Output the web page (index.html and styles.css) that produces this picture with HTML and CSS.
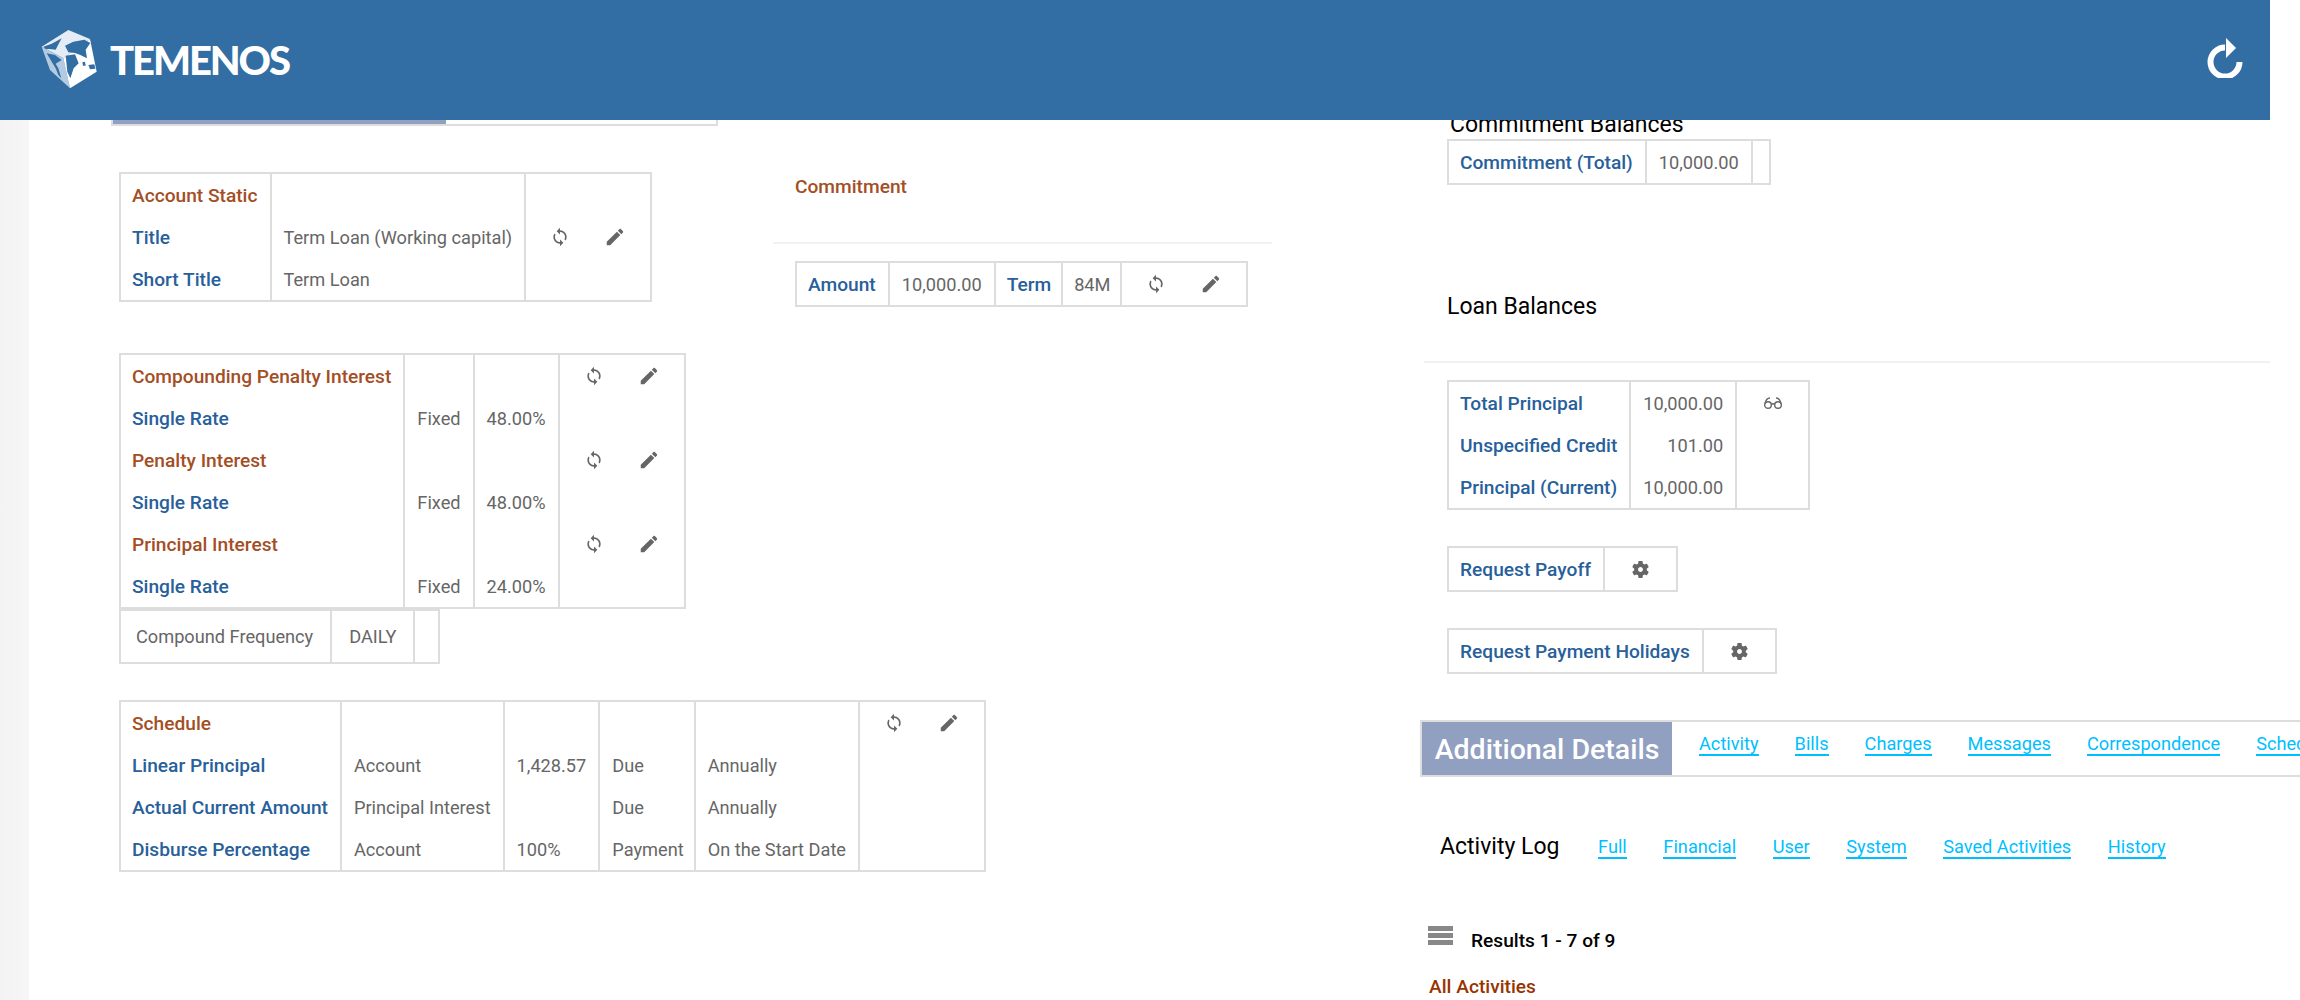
FILE: index.html
```html
<!DOCTYPE html>
<html lang="en">
<head>
<meta charset="utf-8">
<title>Temenos</title>
<link rel="stylesheet" href="styles.css">
</head>
<body>
<svg class="defs" width="0" height="0" aria-hidden="true">
  <symbol id="i-sync" viewBox="0 0 24 24"><path d="M12 4V1L8 5l4 4V6c3.31 0 6 2.69 6 6 0 1.01-.25 1.97-.7 2.8l1.46 1.46C19.54 15.03 20 13.57 20 12c0-4.42-3.58-8-8-8zm0 14c-3.31 0-6-2.69-6-6 0-1.01.25-1.97.7-2.8L5.24 7.74C4.46 8.97 4 10.43 4 12c0 4.42 3.58 8 8 8v3l4-4-4-4v3z"/></symbol>
  <symbol id="i-edit" viewBox="0 0 24 24"><path d="M3 17.25V21h3.75L17.81 9.94l-3.75-3.75L3 17.25zM20.71 7.04c.39-.39.39-1.02 0-1.41l-2.34-2.34c-.39-.39-1.02-.39-1.41 0l-1.83 1.83 3.75 3.75 1.83-1.83z"/></symbol>
  <symbol id="i-gear" viewBox="0 0 24 24"><path d="M19.14 12.94c.04-.3.06-.61.06-.94 0-.32-.02-.64-.07-.94l2.03-1.58c.18-.14.23-.41.12-.61l-1.92-3.32c-.12-.22-.37-.29-.59-.22l-2.39.96c-.5-.38-1.03-.7-1.62-.94l-.36-2.54c-.04-.24-.24-.41-.48-.41h-3.84c-.24 0-.43.17-.47.41l-.36 2.54c-.59.24-1.13.57-1.62.94l-2.39-.96c-.22-.08-.47 0-.59.22L2.74 8.87c-.12.21-.08.47.12.61l2.03 1.58c-.05.3-.09.63-.09.94s.02.64.07.94l-2.03 1.58c-.18.14-.23.41-.12.61l1.92 3.32c.12.22.37.29.59.22l2.39-.96c.5.38 1.03.7 1.62.94l.36 2.54c.05.24.24.41.48.41h3.84c.24 0 .44-.17.47-.41l.36-2.54c.59-.24 1.13-.56 1.62-.94l2.39.96c.22.08.47 0 .59-.22l1.92-3.32c.12-.22.07-.47-.12-.61l-2.01-1.58zM12 14.8c-1.54 0-2.8-1.26-2.8-2.8s1.26-2.8 2.8-2.8 2.8 1.26 2.8 2.8-1.26 2.8-2.8 2.8z"/></symbol>
</svg>

<header class="topbar">
  <div class="brand">
    <svg class="cube" viewBox="18 15 177 180" width="59" height="60" aria-hidden="true">
      <path fill="#e4edf5" d="M100 15 165 42 85 100 20 65z"/>
      <path fill="#b3cbe0" d="M20 65 85 100 105 190 45 135z"/>
      <path fill="#fff" d="M165 42 185 140 105 190 85 100z"/>
      <path fill="#326ea3" d="M25 65 50 56 80 40 72 55 62 74 44 72 32 72z"/>
      <path fill="#326ea3" d="M35 85 60 90 80 105 62 116 70 130 79 160 70 150 62 130 50 110z"/>
      <path fill="#326ea3" d="M90 62 115 50 148 44 166 54 152 74 156 100 136 90 120 84 100 82z"/>
      <path fill="#326ea3" d="M92 92 120 88 131 115 116 130 106 160 97 140z"/>
      <path fill="#326ea3" d="M160 120 178 118 181 131 165 133z"/>
      <path fill="#326ea3" d="M142 112 150 110 152 122 144 122z"/>
    </svg>
    <span class="wordmark">TEMENOS</span>
  </div>
  <svg class="reload" viewBox="0 0 36 40" width="36" height="40" aria-hidden="true">
    <path d="M32.5 24A14.5 14.5 0 1 1 18 9.5" fill="none" stroke="#fff" stroke-width="6"/>
    <path d="M19 0 29 10 19 20z" fill="#fff"/>
  </svg>
</header>

<main class="page">
  <div class="gutter"></div>

  <section class="col-left">
    <div class="tabbar"><div class="tabbar-active"></div></div>

    <table class="grid t-account">
      <tr><td class="head">Account Static</td><td></td><td></td></tr>
      <tr><td class="key">Title</td><td>Term Loan (Working capital)</td>
        <td class="acts"><svg class="sync"><use href="#i-sync"/></svg><svg class="edit"><use href="#i-edit"/></svg></td></tr>
      <tr><td class="key">Short Title</td><td>Term Loan</td><td></td></tr>
    </table>

    <table class="grid t-interest">
      <tr><td class="head">Compounding Penalty Interest</td><td></td><td></td>
        <td class="acts"><svg class="sync"><use href="#i-sync"/></svg><svg class="edit"><use href="#i-edit"/></svg></td></tr>
      <tr><td class="key">Single Rate</td><td>Fixed</td><td>48.00%</td><td></td></tr>
      <tr><td class="head">Penalty Interest</td><td></td><td></td>
        <td class="acts"><svg class="sync"><use href="#i-sync"/></svg><svg class="edit"><use href="#i-edit"/></svg></td></tr>
      <tr><td class="key">Single Rate</td><td>Fixed</td><td>48.00%</td><td></td></tr>
      <tr><td class="head">Principal Interest</td><td></td><td></td>
        <td class="acts"><svg class="sync"><use href="#i-sync"/></svg><svg class="edit"><use href="#i-edit"/></svg></td></tr>
      <tr><td class="key">Single Rate</td><td>Fixed</td><td>24.00%</td><td></td></tr>
    </table>

    <table class="grid t-freq">
      <tr><td>Compound Frequency</td><td>DAILY</td><td></td></tr>
    </table>

    <table class="grid t-schedule">
      <tr><td class="head">Schedule</td><td></td><td></td><td></td><td></td>
        <td class="acts"><svg class="sync"><use href="#i-sync"/></svg><svg class="edit"><use href="#i-edit"/></svg></td></tr>
      <tr><td class="key">Linear Principal</td><td>Account</td><td>1,428.57</td><td>Due</td><td>Annually</td><td></td></tr>
      <tr><td class="key">Actual Current Amount</td><td>Principal Interest</td><td></td><td>Due</td><td>Annually</td><td></td></tr>
      <tr><td class="key">Disburse Percentage</td><td>Account</td><td>100%</td><td>Payment</td><td>On the Start Date</td><td></td></tr>
    </table>
  </section>

  <section class="col-mid">
    <h3 class="commit-title">Commitment</h3>
    <hr class="rule">
    <table class="grid t-commit">
      <tr><td class="key">Amount</td><td>10,000.00</td><td class="key">Term</td><td>84M</td>
        <td class="acts"><svg class="sync"><use href="#i-sync"/></svg><svg class="edit"><use href="#i-edit"/></svg></td></tr>
    </table>
  </section>

  <section class="col-right">
    <h2 class="balance-title title-commit">Commitment Balances</h2>
    <table class="grid t-cbal">
      <tr><td class="key">Commitment (Total)</td><td>10,000.00</td><td></td></tr>
    </table>

    <h2 class="balance-title title-loan">Loan Balances</h2>
    <hr class="rule rule-right">
    <table class="grid t-loan">
      <tr><td class="key">Total Principal</td><td class="num">10,000.00</td>
        <td class="icon-cell"><svg class="glasses" viewBox="0 0 18 12" width="18" height="12" aria-hidden="true"><g fill="none" stroke="#666" stroke-width="1.4"><circle cx="4" cy="8" r="3.3"/><circle cx="14" cy="8" r="3.3"/><path d="M7.3 7.4c1.1-.8 2.3-.8 3.4 0M1 6.6C1.8 3 3.4 1 6 1M17 6.6C16.2 3 14.6 1 12 1"/></g></svg></td></tr>
      <tr><td class="key">Unspecified Credit</td><td class="num">101.00</td><td></td></tr>
      <tr><td class="key">Principal (Current)</td><td class="num">10,000.00</td><td></td></tr>
    </table>

    <table class="grid t-req t-payoff">
      <tr><td class="key">Request Payoff</td><td class="icon-cell"><svg class="gear"><use href="#i-gear"/></svg></td></tr>
    </table>
    <table class="grid t-req t-holiday">
      <tr><td class="key">Request Payment Holidays</td><td class="icon-cell"><svg class="gear"><use href="#i-gear"/></svg></td></tr>
    </table>

    <nav class="details-bar">
      <div class="details-tab">Additional Details</div>
      <a href="#">Activity</a>
      <a href="#">Bills</a>
      <a href="#">Charges</a>
      <a href="#">Messages</a>
      <a href="#">Correspondence</a>
      <a href="#">Schedule</a>
    </nav>

    <nav class="log-bar">
      <span class="log-title">Activity Log</span>
      <a href="#">Full</a>
      <a href="#">Financial</a>
      <a href="#">User</a>
      <a href="#">System</a>
      <a href="#">Saved Activities</a>
      <a href="#">History</a>
    </nav>

    <div class="results">
      <span class="burger"><i></i><i></i><i></i></span>
      <span class="results-text">Results 1 - 7 of 9</span>
    </div>
    <div class="all-activities">All Activities</div>
  </section>
</main>
</body>
</html>
```
FILE: styles.css
```css
* { box-sizing: border-box; }
html, body { margin: 0; height: 1000px; overflow: hidden; background: #fff; }
body { font: 18.2px/24px Roboto, "Liberation Sans", sans-serif; color: #666; }
.defs { position: absolute; }

.topbar {
  position: fixed; top: 0; left: 0; width: 2270px; height: 120px; z-index: 5;
  background: #326ea3; display: flex; align-items: center; justify-content: space-between;
  padding: 0 27px 0 41px;
}
.brand { display: flex; align-items: center; gap: 10px; }
.cube { display: block; }
.wordmark { font: 900 40px/60px Lato, sans-serif; color: #fff; letter-spacing: -2.1px; }
.reload { display: block; margin-top: -4px; }

.page { display: flex; height: 1000px; }
.gutter { width: 29px; flex: none; background: linear-gradient(90deg, #f3f3f3, #f6f6f6); }

.col-left { width: 744px; flex: none; padding: 66px 0 0 90px; }
.col-mid { width: 499px; flex: none; padding-top: 175px; }
.col-right { width: 880px; flex: none; margin-left: 148px; padding-top: 113px; overflow: hidden; height: 1000px; }

.tabbar { margin: 0 0 46px -8px; width: 607px; height: 60px; border: 2px solid #ddd; border-top: 0; background: #fff; }
.tabbar-active { width: 333px; height: 58px; background: #919fc0; }

.grid { width: max-content; border-collapse: separate; border-spacing: 0; border: 2px solid #ddd; background: #fff; position: relative; }
.grid td { height: 42px; padding: 2px 12px 0 11px; white-space: nowrap; vertical-align: middle; }
.grid td + td { border-left: 2px solid #ddd; padding-left: 12px; }
.head, .key { font-size: 19.15px; font-weight: 500; }
.head { color: #a34e24; }
.key { color: #27609a; }
.num { text-align: right; }

.grid td.acts { padding: 0; width: 126px; text-align: center; font-size: 0; line-height: 0; }
.sync, .edit { width: 20px; height: 20px; fill: #666; vertical-align: middle; }
.sync { margin-right: 34px; }
.edit { width: 22px; height: 22px; }
.grid td.icon-cell { padding: 0; text-align: center; font-size: 0; line-height: 0; }
.gear { width: 21px; height: 21px; fill: #666; vertical-align: middle; }

.t-interest { margin-top: 51px; }
.t-freq { margin-top: 0; }
.grid.t-freq td { height: 51px; padding: 0 17px 0 15px; }
.grid.t-freq td + td { padding: 0 17px; }
.grid.t-freq td:last-child { width: 25px; padding: 0; }
.t-schedule { margin-top: 36px; }
.grid.t-schedule td:nth-child(4) { padding-right: 10px; }
.t-loan { margin-top: 17px; }
.t-loan .icon-cell { width: 73px; }
.t-req .icon-cell { width: 73px; }
.t-payoff { margin-top: 36px; }
.t-holiday { margin-top: 36px; }

.commit-title { margin: 0 0 0 22px; font: 500 19.15px/24px Roboto, sans-serif; color: #a34e24; }
.rule { height: 2px; border: 0; margin: 0; background: #f1f1f1; }
.col-mid .rule { margin-top: 43px; }
.t-commit { margin: 17px 0 0 22px; }
.grid.t-commit td:nth-child(3), .grid.t-commit td:nth-child(4) { padding-left: 11px; padding-right: 10px; }

.balance-title { margin: 0; font: 400 23px/24px Roboto, sans-serif; color: #000; }
.title-commit { margin-left: 30px; height: 26px; }
.t-cbal { margin-left: 27px; }
.grid.t-cbal td:last-child { width: 18px; padding: 0; }
.title-loan { margin: 110px 0 0 27px; }
.rule-right { margin: 42px 0 0 4px; width: 846px; }
.t-loan, .t-req { margin-left: 27px; }

.details-bar {
  display: flex; align-items: flex-start; gap: 36px;
  margin-top: 46px; height: 57px; width: 1000px;
  border: 2px solid #ddd; border-right: 0;
}
.details-tab {
  width: 250px; height: 53px; flex: none; margin-right: -9px;
  background: #919fc0; color: #fff; font: 500 28.5px/55px Roboto, sans-serif; text-align: center;
}
.details-bar a, .log-bar a {
  color: #00bfff; text-decoration: none; border-bottom: 2px solid #00bfff; line-height: 20px; flex: none;
}
.details-bar a { margin-top: 12px; }
.log-bar { display: flex; align-items: center; gap: 36.6px; margin: 58px 0 0 20px; height: 24px; }
.log-title { font-size: 23px; color: #000; margin-right: 2px; }
.log-bar a { margin-top: 2px; }

.results { display: flex; align-items: flex-start; margin: 65px 0 0 8px; height: 26px; }
.burger { display: flex; flex-direction: column; gap: 2px; width: 25px; margin-top: 2px; }
.burger i { display: block; height: 5px; background: #888; }
.results-text { color: #000; font-size: 19.15px; font-weight: 500; margin: 5px 0 0 18px; }
.all-activities { margin: 25px 0 0 9px; color: #993300; font-size: 19.15px; font-weight: 500; }
```
